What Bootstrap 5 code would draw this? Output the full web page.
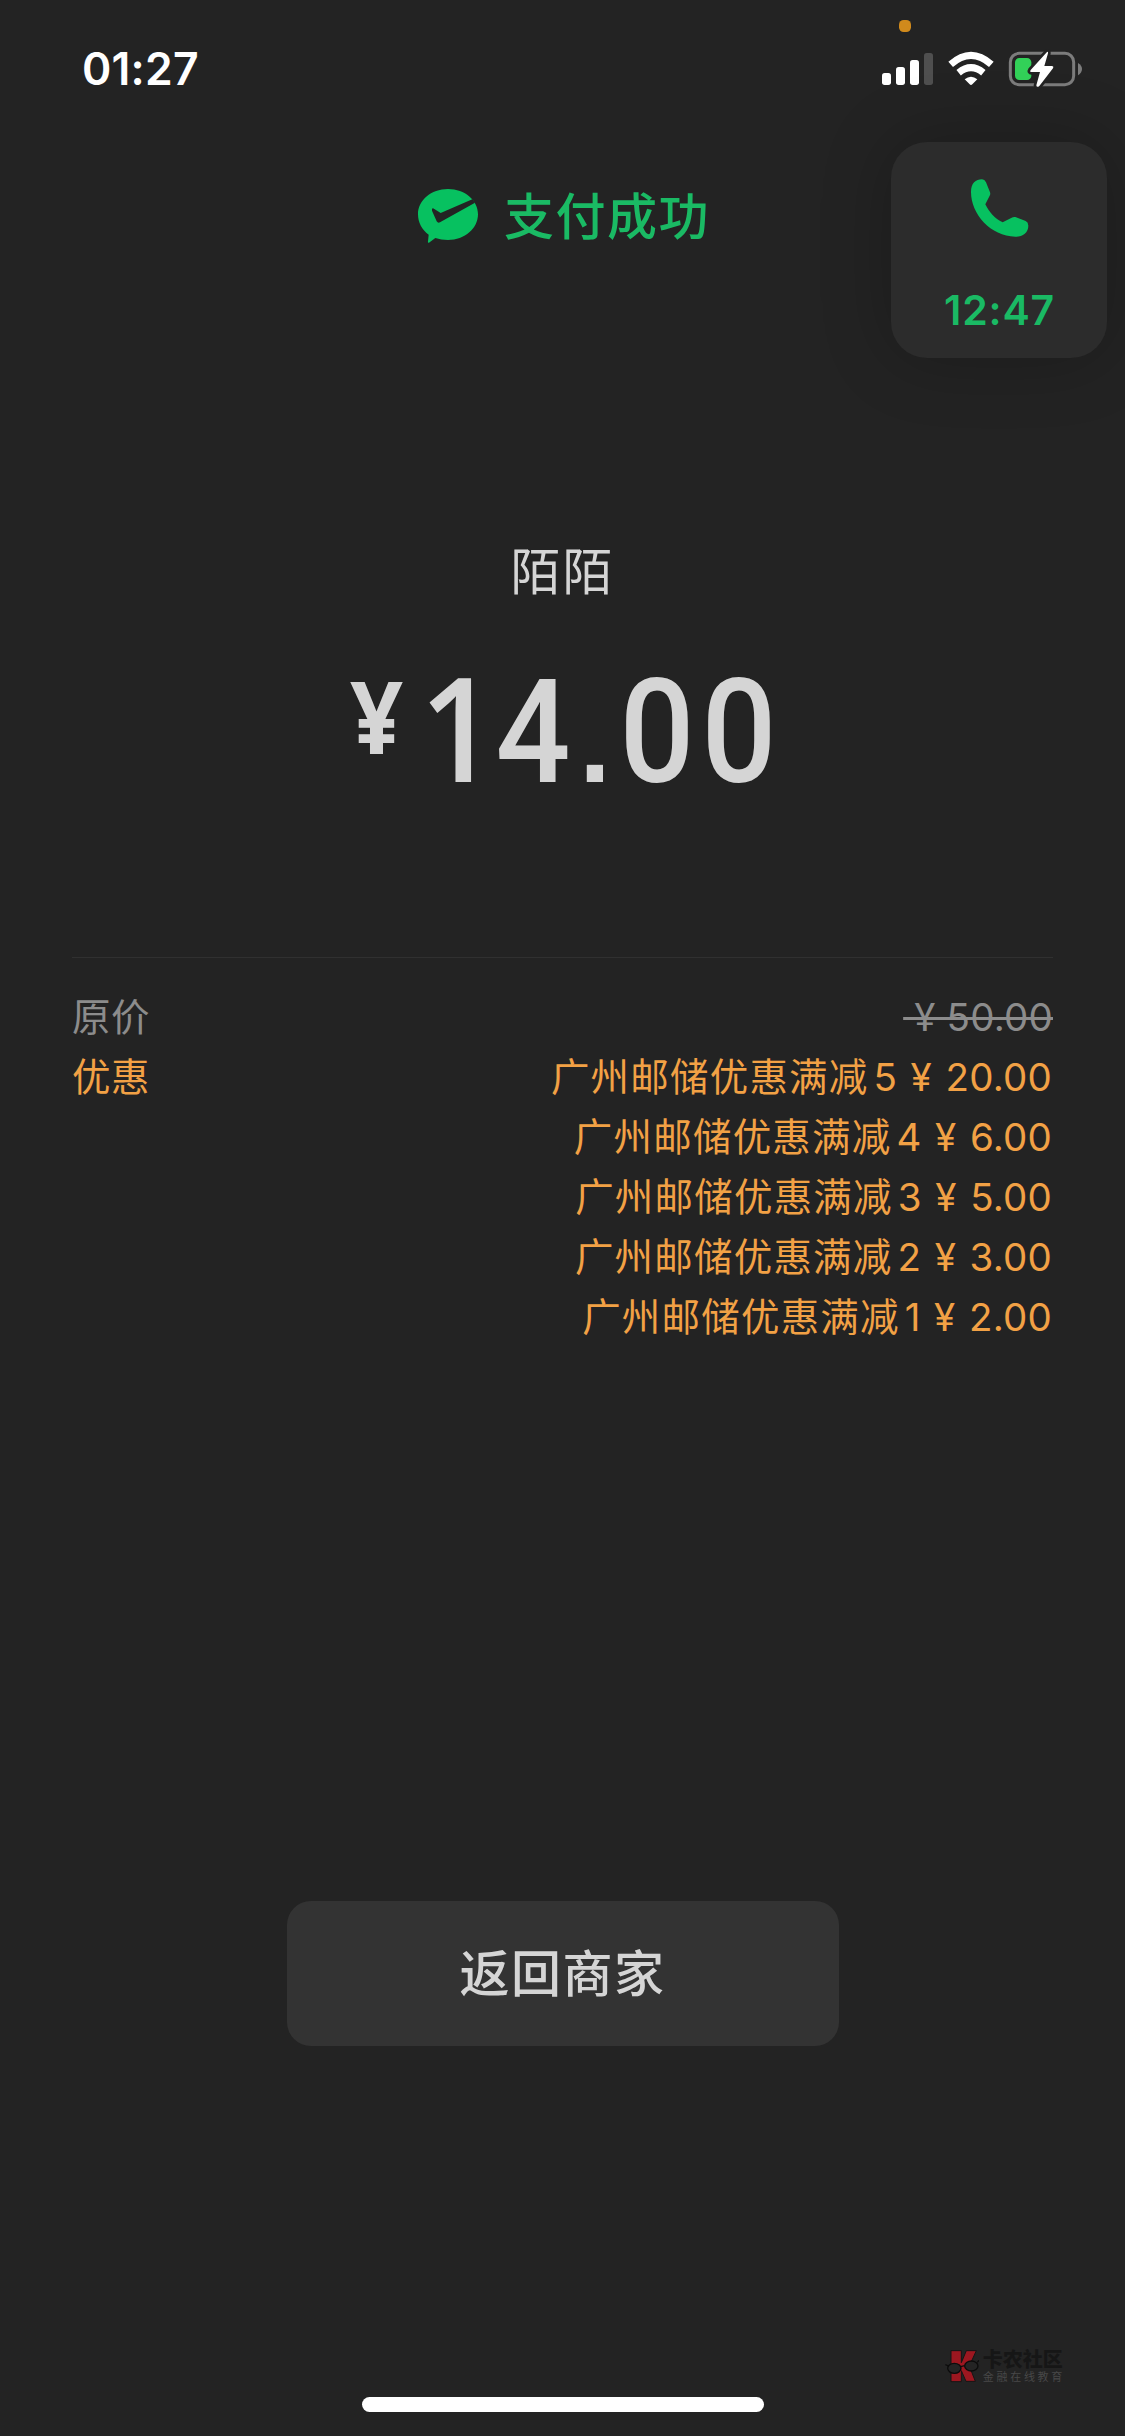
<!DOCTYPE html>
<html lang="zh-CN">
<head>
<meta charset="utf-8">
<meta name="viewport" content="width=device-width, initial-scale=1">
<title>支付成功</title>
<link href="https://cdn.jsdelivr.net/npm/bootstrap@5.3.0/dist/css/bootstrap.min.css" rel="stylesheet">
<style>
html,body{height:100%}
body{background:#232323;color:#d5d5d5;font-family:Inter,"Noto Sans CJK SC",sans-serif;width:1125px;height:2436px;overflow:hidden}
svg{display:block;flex:none}
.screen{height:2436px}
.status-bar{height:142px;padding:0 40px 0 82px}
.clock{font-size:44.5px;font-weight:600;color:#fff;line-height:54px;margin-top:42px;letter-spacing:.2px}
.sys{margin-top:10px}
.paid{height:52px;margin-top:47px;padding-left:418px}
.paid-text{font-size:50px;font-weight:500;color:#1aba64;letter-spacing:1.5px;line-height:52px;margin-left:25px;margin-top:2px}
.call-tile{right:18px;top:142px;width:216px;height:216px;border-radius:36px;background:#2c2c2c;box-shadow:0 0 70px rgba(0,0,0,.22);padding:37px 0 0 1px}
.call-time{font-size:41px;font-weight:600;line-height:50px;color:#1aba64;margin-top:48px;letter-spacing:.8px}
.payee{font-size:50px;line-height:60px;letter-spacing:2px;margin-top:301px}
.amount{font-family:Roboto,sans-serif;font-weight:500;line-height:150px;height:150px;margin-top:54px;padding-left:350px}
.yen{font-size:100px;font-family:"Noto Sans",sans-serif;font-weight:700;line-height:102px;width:74px;margin-top:8px;transform:scaleX(.93);transform-origin:0 50%}
.digits{font-size:145px;margin-top:-5px}
.digits span{display:flex;justify-content:center;width:82px}
.digits .one{width:68px;font-family:"Open Sans",sans-serif;font-weight:600;transform:scaleX(.93)}
.digits .dot{width:42px;font-family:"Liberation Sans",sans-serif;font-weight:700;font-size:115px}
.digits .narrow{transform:scaleX(.91)}
.bill{margin:151px 72px 0;border-top:1px solid #303030;padding-top:29px;font-size:38.5px;line-height:60px;color:#f2a145;height:944px}
.lbl{letter-spacing:.5px}
.orig{color:#8c8c8c}
.cjk{letter-spacing:1.2px;margin-right:5px}
.ls{letter-spacing:.2px;word-spacing:2.5px;margin-right:1px}
.orig .ls{margin-right:0;word-spacing:0;text-decoration-thickness:3px}
.back-btn,.back-btn:hover{width:552px;height:145px;border-radius:24px;background:#333;color:#d5d5d5;border:0;font-size:50px;font-weight:500;letter-spacing:1.5px;line-height:60px}
.foot{margin-top:303px;padding-right:60px}
.wm1{font-size:20px;font-weight:900;color:#161616;line-height:21px}
.wm2{font-size:11px;color:#484848;line-height:13px;letter-spacing:2.7px}
.homebar{width:402px;height:15px;border-radius:8px;background:#fff;margin-top:12px}
</style>
</head>
<body>
<main class="screen d-flex flex-column">
  <header class="status-bar d-flex justify-content-between align-items-start">
    <div class="clock">01:27</div>
    <svg class="sys" width="205" height="80" viewBox="60 0 615 240">
      <rect x="117" y="30" width="36" height="36" rx="14" fill="#d08a1c"/>
      <g fill="#fff"><rect x="66" y="189" width="27" height="36" rx="8"/><rect x="108" y="171" width="27" height="54" rx="8"/><rect x="150" y="150" width="27" height="75" rx="8"/></g>
      <rect x="192" y="129" width="27" height="96" rx="8" fill="#4f4f4f"/>
      <g fill="none" stroke="#fff" stroke-width="21"><path d="M272 163Q333 109 394 163"/><path d="M296 188Q333 158 370 188"/></g>
      <path d="M314 208Q333 193 352 208L337 223Q333 227 329 223Z" fill="#fff"/>
      <rect x="451" y="130" width="190" height="94" rx="26" fill="none" stroke="#7c7c7c" stroke-width="9"/>
      <path d="M654 159Q666 166 666 177T654 196Z" fill="#7c7c7c"/>
      <rect x="465" y="144" width="49" height="66" rx="13" fill="#32d158"/>
      <path d="M561 126L512 180Q508 186 515 186H540L529 226Q530 234 538 228L579 175Q582 168 575 168H553L564 130Q565 123 561 126Z" fill="#fff" stroke="#232323" stroke-width="16" paint-order="stroke"/>
    </svg>
  </header>

  <section class="paid d-flex align-items-start">
    <svg width="61" height="54" viewBox="54 57 183 162">
      <path d="M144 57C195 57 234 91 234 133S195 210 144 210C130 210 118 208 106 204L87 218Q83 220 84 214L86 194C66 180 54 157 54 133C54 91 93 57 144 57Z" fill="#07c160"/>
      <path d="M96 117Q98 113 103 117L122 129L217 88L225 98L120 157Q114 161 110 154L96 122Z" fill="#232323"/>
    </svg>
    <div class="paid-text">支付成功</div>
  </section>

  <aside class="call-tile position-absolute d-flex flex-column align-items-center">
    <svg width="58" height="58" viewBox="331 177 174 174">
      <path d="M331 216C331 190 345 178 364 178Q372 178 376 187L388 217Q390 222 387 227L374 253C385 276 402 296 426 307L453 293Q458 290 464 291L495 303Q503 307 503 317C503 338 486 350 464 350C390 348 331 283 331 216Z" fill="#07c160"/>
    </svg>
    <div class="call-time">12:47</div>
  </aside>

  <div class="payee text-center">陌陌</div>
  <div class="amount d-flex align-items-start"><span class="yen">¥</span><div class="digits d-flex align-items-baseline"><span class="one">1</span><span class="narrow">4</span><span class="dot">.</span><span class="narrow">0</span><span class="narrow">0</span></div></div>

  <section class="bill">
    <div class="d-flex justify-content-between orig"><span class="lbl">原价</span><s class="ls">&nbsp;¥ 50.00</s></div>
    <div class="d-flex justify-content-between">
      <span class="lbl">优惠</span>
      <div class="text-end ls">
        <div><span class="cjk">广州邮储优惠满减</span>5 ¥ 20.00</div>
        <div><span class="cjk">广州邮储优惠满减</span>4 ¥ 6.00</div>
        <div><span class="cjk">广州邮储优惠满减</span>3 ¥ 5.00</div>
        <div><span class="cjk">广州邮储优惠满减</span>2 ¥ 3.00</div>
        <div><span class="cjk">广州邮储优惠满减</span>1 ¥ 2.00</div>
      </div>
    </div>
  </section>

  <button class="btn back-btn mx-auto flex-shrink-0" type="button">返回商家</button>

  <div class="foot d-flex justify-content-end align-items-center">
    <svg width="34" height="36" viewBox="45 57 102 108">
      <path d="M63 62H94V98L109 62H139L118 108L136 154H108L94 122V155H63Z" fill="#9c1720" stroke="#151515" stroke-width="3"/>
      <g fill="#242424" stroke="#0c0c0c" stroke-width="4"><ellipse cx="73" cy="115" rx="20" ry="15"/><ellipse cx="124" cy="108" rx="20" ry="15"/><path d="M46 104L56 108M92 110L104 107M142 97L147 91"/></g>
    </svg>
    <div class="ms-1"><div class="wm1">卡农社区</div><div class="wm2">金融在线教育</div></div>
  </div>
  <div class="homebar mx-auto"></div>
</main>
<script src="https://cdn.jsdelivr.net/npm/bootstrap@5.3.0/dist/js/bootstrap.bundle.min.js"></script>
</body>
</html>
